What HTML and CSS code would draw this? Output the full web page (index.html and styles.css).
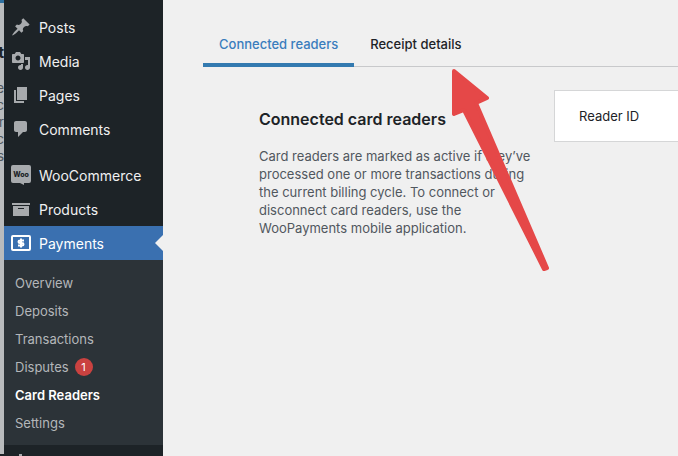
FILE: index.html
```html
<!DOCTYPE html>
<html lang="en">
<head>
    <meta charset="UTF-8">
    <meta name="viewport" content="width=device-width, initial-scale=1.0">
    <title>Card Readers</title>
    <link rel="stylesheet" href="styles.css">
</head>
<body>
    <div class="page">
        <div class="backdrop" aria-hidden="true">
            <strong>t</strong>
            <span>e</span>
            <span>c</span>
            <span>r</span>
            <span>c</span>
            <span>s</span>
        </div>

        <nav class="sidebar">
            <ul class="menu">
                <li><a href="#" class="menu-item">
                    <svg class="icon" viewBox="0 0 20 20"><path d="M10.44 3.02l1.82-1.82 6.36 6.35-1.83 1.82c-1.05-.68-2.48-.57-3.41.36l-.75.75c-.92.93-1.04 2.35-.35 3.41l-1.83 1.82-2.41-2.41-2.8 2.79c-.42.42-3.38 2.71-3.8 2.29s1.86-3.39 2.28-3.81l2.79-2.79L4.1 9.36l1.83-1.82c1.05.69 2.48.57 3.4-.36l.75-.75c.93-.92 1.05-2.35.36-3.41z"/></svg>
                    Posts
                </a></li>
                <li><a href="#" class="menu-item">
                    <svg class="icon" viewBox="0 0 20 20"><path d="M13 11V4c0-.55-.45-1-1-1h-1.67L9 1H5L3.67 3H2c-.55 0-1 .45-1 1v7c0 .55.45 1 1 1h10c.55 0 1-.45 1-1zM7 4.5c1.38 0 2.5 1.12 2.5 2.5S8.38 9.5 7 9.5 4.5 8.38 4.5 7 5.62 4.5 7 4.5zM14 6h5v10.5c0 1.38-1.12 2.5-2.5 2.5S14 17.88 14 16.5s1.12-2.5 2.5-2.5c.17 0 .34.02.5.05V9h-3V6zm-4 8.05V13h2v3.5c0 1.38-1.12 2.5-2.5 2.5S7 17.88 7 16.5 8.12 14 9.5 14c.17 0 .34.02.5.05z"/></svg>
                    Media
                </a></li>
                <li><a href="#" class="menu-item">
                    <svg class="icon" viewBox="0 0 20 20"><path d="M6 15V2h10v13H6zm-1 1h8v2H3V5h2v11z"/></svg>
                    Pages
                </a></li>
                <li><a href="#" class="menu-item">
                    <svg class="icon" viewBox="0 0 20 20"><path d="M5 2h9c1.1 0 2 .9 2 2v7c0 1.1-.9 2-2 2h-2l-5 5v-5H5c-1.1 0-2-.9-2-2V4c0-1.1.9-2 2-2z"/></svg>
                    Comments
                </a></li>
            </ul>

            <ul class="menu">
                <li><a href="#" class="menu-item">
                    <svg class="icon" viewBox="0 0 20 20">
                        <path d="M2 0h16q2 0 2 2v14q0 2-2 2h-5v2l-4-2H2q-2 0-2-2V2q0-2 2-2z"/>
                        <text class="woo-text" x="10" y="12" text-anchor="middle">Woo</text>
                    </svg>
                    WooCommerce
                </a></li>
                <li><a href="#" class="menu-item">
                    <svg class="icon" viewBox="0 0 20 20"><path d="M19 4v2H1V4h18zM2 7h16v10H2V7zm11 3V9H7v1h6z"/></svg>
                    Products
                </a></li>
                <li><a href="#" class="menu-item current">
                    <svg class="icon" viewBox="0 0 20 20">
                        <rect class="line" x="1" y="3" width="18" height="14" rx="1"/>
                        <path class="line" d="M13 7.500H9q-1.500 0-1.500 1.200T9 10h2q1.500 0 1.500 1.200T11 12.500H7M10 5.500v9"/>
                    </svg>
                    Payments
                </a></li>
            </ul>

            <ul class="submenu">
                <li><a href="#">Overview</a></li>
                <li><a href="#">Deposits</a></li>
                <li><a href="#">Transactions</a></li>
                <li><a href="#">Disputes <span class="count">1</span></a></li>
                <li><a href="#" class="selected">Card Readers</a></li>
                <li><a href="#">Settings</a></li>
            </ul>

            <a href="#" class="menu-item" aria-label="More">
                <svg class="icon" viewBox="0 0 20 20"><path d="M8 2h3v4h6v4H3V6h5z"/></svg>
            </a>
        </nav>

        <main class="content">
            <div class="tabs" role="tablist">
                <button class="tab active" role="tab" aria-selected="true">Connected readers</button>
                <button class="tab" role="tab" aria-selected="false">Receipt details</button>
            </div>

            <section class="settings">
                <div class="description">
                    <h2>Connected card readers</h2>
                    <p>Card readers are marked as active if they’ve processed one or more transactions during the current billing cycle. To connect or disconnect card readers, use the WooPayments mobile application.</p>
                </div>
                <div class="card">
                    <table>
                        <thead>
                            <tr><th scope="col">Reader ID</th></tr>
                        </thead>
                    </table>
                </div>
            </section>

            <!-- Arrow pointing at the receipt tab -->
            <svg class="arrow" viewBox="0 0 100 204" aria-hidden="true">
                <path d="M4 4L37 31L26 36L97 201L94 202L14 43L4 47z"/>
            </svg>
        </main>
    </div>
</body>
</html>
```
FILE: styles.css
```css
* {
    box-sizing: border-box;
}
body {
    margin: 0;
    font-family: Inter, "Liberation Sans", sans-serif;
    font-size: 13px;
    background-color: #f0f0f0;
    color: #1d2327;
}
ul {
    list-style: none;
    margin: 0;
    padding: 0;
}
a {
    color: inherit;
    text-decoration: none;
}
.page {
    display: flex;
    height: 100vh;
    overflow: hidden;
}

/* Sliver of the page behind */
.backdrop {
    flex: 0 0 4px;
    display: flex;
    flex-direction: column;
    align-items: flex-end;
    overflow: hidden;
    border-top: 3px solid #2d6f9f;
    border-bottom: 2px solid #1d2327;
    background-color: #b9bbbd;
    color: #50575e;
    line-height: 17px;
    padding-top: 41px;
}
.backdrop strong {
    font-size: 16px;
    color: #1d2327;
    margin-bottom: 19px;
}

/* Sidebar */
.sidebar {
    flex: 0 0 159px;
    padding-top: 10px;
    background-color: #1d2327;
    color: #f0f0f1;
}
.menu + .menu {
    margin-top: 12px;
}
.menu-item {
    display: flex;
    align-items: center;
    gap: 8px;
    height: 34px;
    padding-left: 7px;
    font-size: 14px;
}
.icon {
    width: 20px;
    height: 20px;
    fill: #a7aaad;
}
.woo-text {
    font-size: 7px;
    font-weight: 800;
    fill: #1d2327;
}
.current {
    position: relative;
    background-color: #3a70b0;
    color: #fff;
}
.current::after {
    content: "";
    position: absolute;
    right: 0;
    border: 8px solid transparent;
    border-right-color: #f0f0f0;
}
.line {
    fill: none;
    stroke: #fff;
    stroke-width: 2;
}
.submenu {
    padding: 9px 0 8px;
    background-color: #2c3338;
    color: #b4b7ba;
}
.submenu a {
    display: flex;
    align-items: center;
    gap: 6px;
    height: 28px;
    padding-left: 11px;
}
.submenu .selected {
    color: #fff;
    font-weight: 600;
}
.count {
    width: 18px;
    border-radius: 9px;
    background-color: #ca4240;
    color: #fff;
    font-size: 11px;
    line-height: 18px;
    text-align: center;
}

/* Content */
.content {
    position: relative;
    flex: 1;
    min-width: 0;
    padding: 20px 0 0 40px;
}
.tabs {
    display: flex;
    border-bottom: 1px solid #c8c9cb;
}
.tab {
    height: 47px;
    margin-bottom: -1px;
    padding: 4px 16px 0;
    border: 0;
    border-bottom: 4px solid transparent;
    background: none;
    color: #1d2327;
    font: inherit;
    font-weight: 500;
}
.tab.active {
    border-bottom-color: #337ab0;
    color: #3a7dbd;
}
.settings {
    display: flex;
    gap: 16px;
    padding: 23px 0 0 56px;
}
.description {
    flex: 0 0 279px;
}
h2 {
    margin: 19px 0 18px;
    font-size: 16px;
    font-weight: 600;
    line-height: 20px;
}
p {
    margin: 0;
    color: #50575e;
    line-height: 18px;
}
.card {
    flex: 1;
    align-self: flex-start;
    border: 1px solid #d5d6d7;
    border-right: 0;
    background-color: #fff;
}
table {
    width: 100%;
    border-collapse: collapse;
}
th {
    height: 50px;
    padding: 0 24px;
    font-weight: 400;
    text-align: left;
}
.arrow {
    position: absolute;
    top: 67px;
    left: 287px;
    width: 100px;
    height: 204px;
    fill: #e54848;
    stroke: #e54848;
    stroke-width: 4;
    stroke-linejoin: round;
}
```
